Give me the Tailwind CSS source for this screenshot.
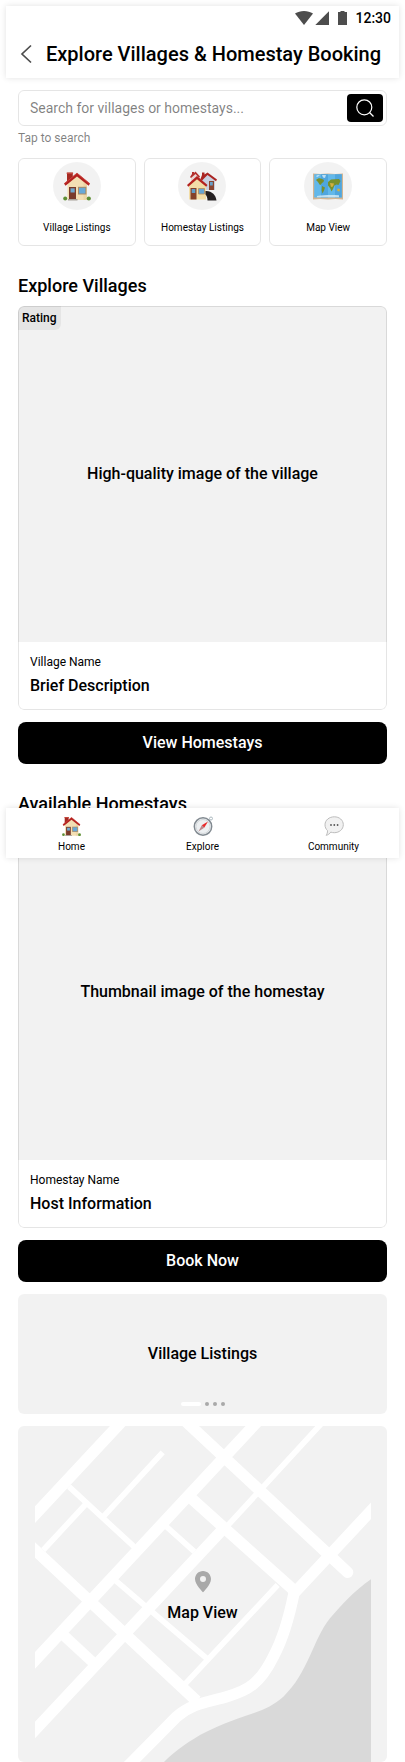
<!DOCTYPE html>
<html lang="en">
<head>
<meta charset="utf-8">
<meta name="viewport" content="width=device-width, initial-scale=1">
<title>Explore Villages &amp; Homestay Booking</title>
<script src="https://cdn.jsdelivr.net/npm/@tailwindcss/browser@4"></script>
</head>
<body class="bg-white">
<svg class="hidden" aria-hidden="true">
  <defs>
    <symbol id="house" viewBox="0 0 28 28">
      <path d="M4 .3h5.800V6L4 11z" fill="#a52a22"/><path d="M3.700 0h6.400v1.500H3.700z" fill="#c4473d"/>
      <path d="M4.500 10 14 2.500 24 11v16.500H4.500z" fill="#f3dfb4"/>
      <path d="M14 2.500 24 11v16.500h-3.500V10z" fill="#e6cb98" opacity=".5"/>
      <path d="M1 11 14 .2 27 11l-1.300 2.300L14 4 2.500 13.300z" fill="#b3211f"/>
      <path d="M1.800 10.800 14 .8l12.200 10" fill="none" stroke="#d4504a" stroke-width=".7"/>
      <path d="M6 14.500h7v12.500H6z" fill="#7a3b2a"/><path d="M7.500 15.800h4.200v4.200H7.500z" fill="#6fa9cf"/><path d="M5 26.500h9.500V28H5z" fill="#a9a29a"/>
      <path d="M15 14.300h8.400v7.700H15z" fill="#a98a66"/><path d="M16 15.300h6.400v5.700H16z" fill="#68a9d8"/>
      <circle cx="2.200" cy="26" r="2" fill="#5f8f35"/><circle cx="25.800" cy="26" r="2.100" fill="#5f8f35"/>
    </symbol>
  </defs>
</svg>
<div class="relative h-[1762px] w-[405px] overflow-hidden bg-white px-1.5 pt-1.5 font-['Roboto',sans-serif] text-black">
  <header class="flex h-[72px] flex-col bg-white shadow-[0_0_6px_rgba(0,0,0,0.12)]">
    <div class="flex h-6 items-center justify-end pr-2">
      <svg class="h-6 w-[53px]" viewBox="0 0 53 24" fill="#4d4d4d">
        <path d="M0 7.500C5 4 13 4 18 7.500L9 19z"/>
        <path d="M34 5.300V19H20.300z"/>
        <path d="M43 6h2.500V5h4v1H52v13h-9z"/>
      </svg>
      <span class="ml-[7px] text-sm font-medium leading-6">12:30</span>
    </div>
    <div class="flex h-12 items-center">
      <svg class="ml-3.5 h-5 w-3" viewBox="0 0 12 20" fill="none" stroke="#4d4d4d" stroke-width="1.700"><path d="M11 1.500 2 10l9 8.500"/></svg>
      <h1 class="ml-3.5 whitespace-nowrap text-xl font-medium">Explore Villages &amp; Homestay Booking</h1>
    </div>
  </header>

  <main class="px-3 pt-3">
    <div class="flex h-9 items-center justify-between rounded-md border border-black/10 pl-[11px] pr-[3px]">
      <span class="text-sm text-black/50">Search for villages or homestays...</span>
      <button class="flex h-7 w-9 items-center justify-center rounded bg-black" aria-label="Search">
        <svg class="h-5 w-5" viewBox="0 0 20 20" fill="none" stroke="#fff" stroke-width="1.200"><circle cx="9.300" cy="9.300" r="7.500"/><path d="m14.500 14.500 4 4"/></svg>
      </button>
    </div>
    <p class="mt-1 text-xs text-black/50">Tap to search</p>

    <div class="mt-3 grid grid-cols-3 gap-2">
      <div class="flex h-[88px] flex-col items-center rounded-md border border-black/10 pt-[3px]">
        <div class="flex h-12 w-12 items-center justify-center rounded-full bg-black/5"><svg class="h-[29px] w-7"><use href="#house"/></svg></div>
        <span class="mt-2.5 text-[10px] leading-4">Village Listings</span>
      </div>
      <div class="flex h-[88px] flex-col items-center rounded-md border border-black/10 pt-[3px]">
        <div class="flex h-12 w-12 items-center justify-center rounded-full bg-black/5">
          <svg class="h-[30px] w-[30px]" viewBox="0 0 30 30">
            <path d="M4 5 8.500 1.500 13 5v9H4z" fill="#ead7d4"/><path d="M3 6 5 3V1h2v1l1.500-1.500 4.500 5-1 1.200L8.500 3 4 7z" fill="#b4302d"/>
            <path d="M15 7.500 20.500 3 28 9v10H15z" fill="#c9d0e0"/><path d="M13.500 8 15 4V1.500h2.500v2L20.500 1.500 30 8.500l-1 1.700L20.500 4 15 9.500z" fill="#aa2422"/>
            <path d="M22 10h5v9h-5z" fill="#8a4532"/><path d="M23 11h2.800v3.500H23z" fill="#68a0c9"/>
            <path d="M2 13.500 10 7l9 7.500V28.500H2z" fill="#f2dda7"/><path d="M0 14 10 5l10.500 9-1.300 1.800L10 8.300 1.300 15.800z" fill="#b3221f"/>
            <path d="M3.500 17h6v11.500h-6z" fill="#844129"/><path d="M4.700 18h3.600v4H4.700z" fill="#5f9dc8"/><path d="M11.500 17.500h6v5.500h-6z" fill="#67a6d3" stroke="#b48b5c" stroke-width=".8"/>
            <path d="M18.500 20c6-.5 10.500 4 11 9.500H20.500c0-3-1-5-2-6z" fill="#231f20"/>
          </svg>
        </div>
        <span class="mt-2.5 text-[10px] leading-4">Homestay Listings</span>
      </div>
      <div class="flex h-[88px] flex-col items-center rounded-md border border-black/10 pt-[3px]">
        <div class="flex h-12 w-12 items-center justify-center rounded-full bg-black/5">
          <svg class="h-[27px] w-[30px]" viewBox="0 0 30 27">
            <path d="M0 .5 7.500 1 15 .5l7.500.5L30 .5v26l-7.500-.5-7.500.5L7.500 26 0 26.500z" fill="#d3b592"/>
            <path d="M1.200 1.200h27.600V24.500H1.200z" fill="#62b8ea"/><path d="M8 1.200h7v23.300H8zM22 1.200h6.800v23.300H22z" fill="#3c94d2" opacity=".5"/>
            <path d="M3 7c2-2 4-2 6-1l2 1-.5 2L9 10l-1.500 2-1-.5L5 9zM9 13l3 1.500-1 3-1.500 3-.8-3zM15 9l3-2.500 8-.5 1.500 2-2 4-2-.5-2 1L20 16l-1.500 2.500-1.200-3-2.300-3z" fill="#78902c"/>
            <path d="M17 10l4 .5-1 3-2 .5zM24.300 15.500l2.700.5-.5 2.500-2.200-.5z" fill="#d3b03f"/>
            <path d="M9 2h4l-1 3-2-.5zM3 3l2-1 2 .5L4 4zM4 23c7-1.300 15-1.300 22-.8v2H4z" fill="#d9eef7" opacity=".8"/>
          </svg>
        </div>
        <span class="mt-2.5 text-[10px] leading-4">Map View</span>
      </div>
    </div>

    <h2 class="mt-7 text-lg font-medium leading-6">Explore Villages</h2>
    <section class="relative mt-2 flex h-[404px] flex-col overflow-hidden rounded-md">
      <div class="flex h-[336px] items-center justify-center bg-black/5 text-base font-medium">High-quality image of the village</div>
      <span class="absolute left-0 top-0 h-6 rounded-br-md bg-black/5 px-1 text-xs font-medium leading-6">Rating</span>
      <div class="px-3 pt-3">
        <p class="text-xs">Village Name</p>
        <p class="mt-1 text-base font-medium">Brief Description</p>
      </div>
      <div class="absolute inset-0 rounded-md border border-black/10"></div>
    </section>
    <button class="mt-3 flex h-[42px] w-full items-center justify-center rounded-lg bg-black text-base font-medium text-white">View Homestays</button>

    <h2 class="mt-7 text-lg font-medium leading-6">Available Homestays</h2>
    <section class="relative mt-2 flex h-[404px] flex-col overflow-hidden rounded-md">
      <div class="flex h-[336px] items-center justify-center bg-black/5 text-base font-medium">Thumbnail image of the homestay</div>
      <div class="px-3 pt-3">
        <p class="text-xs">Homestay Name</p>
        <p class="mt-1 text-base font-medium">Host Information</p>
      </div>
      <div class="absolute inset-0 rounded-md border border-black/10"></div>
    </section>
    <button class="mt-3 flex h-[42px] w-full items-center justify-center rounded-lg bg-black text-base font-medium text-white">Book Now</button>

    <section class="mt-3 flex h-[120px] flex-col items-center rounded-md bg-black/5 pt-12">
      <p class="text-base font-medium">Village Listings</p>
      <div class="mt-9 flex h-1 items-center gap-1 pl-px">
        <span class="h-1 w-5 rounded-full bg-white"></span>
        <span class="h-1 w-1 rounded-full bg-black/30"></span>
        <span class="h-1 w-1 rounded-full bg-black/30"></span>
        <span class="h-1 w-1 rounded-full bg-black/30"></span>
      </div>
    </section>

    <section class="relative mt-3 h-[336px] overflow-hidden rounded-md bg-[#f2f2f2]">
      <svg class="h-[336px] w-[369px]" viewBox="54 18 1107 1008">
        <clipPath id="area"><path d="M105 18h1008v1008H105z"/></clipPath>
        <g clip-path="url(#area)" fill="none" stroke="#fff">
          <path d="M1113 478C1060 515 1030 550 990 595C940 655 925 760 850 830C790 885 720 880 600 945C550 975 520 998 492 1026H1113Z" fill="#d9d9d9" stroke="none"/>
          <g stroke-width="34">
            <path d="M373-3.500 85 305.500M780-3.500 85 742.500M1133 251 883 519M672 324 85 951.500M552-.6 1000 417M577 238 885 514M85 371.300 590 843"/>
            <path d="M1000 417l43 40" stroke-linecap="round"/>
            <path d="M883 515C868 590 850 655 820 710C780 790 745 812 680 830C620 847 575 850 530 890L376 1046"/>
            <path d="M190 645 282 730" stroke-width="32"/>
          </g>
          <path stroke-width="17" d="M974 0 680 320M207 200 402 380M255 255 130 390M488 97 310 290M497 318 583 395M347 482 445 566 620 715M833 495 557 790"/>
        </g>
        <path d="M609 453c-13.300 0-24 10.700-24 24 0 17 24 40 24 40s24-23 24-40c0-13.300-10.700-24-24-24zm0 33a9 9 0 1 1 0-18 9 9 0 0 1 0 18z" fill="#a9a9a9"/>
      </svg>
      <p class="absolute inset-x-0 top-[175px] text-center text-base font-medium">Map View</p>
    </section>
  </main>

  <nav class="absolute left-1.5 top-[808px] grid h-[50px] w-[393px] grid-cols-3 bg-white pt-2 text-[10px] leading-4 shadow-[0_0_6px_rgba(0,0,0,0.12)]">
    <div class="flex flex-col items-center gap-[3px]"><svg class="mt-px h-[19px] w-[19px]"><use href="#house"/></svg><span>Home</span></div>
    <div class="flex flex-col items-center gap-[3px]">
      <svg class="h-5 w-5" viewBox="0 0 20 20"><circle cx="18" cy="2.500" r="1.500" fill="none" stroke="#9aabb2" stroke-width=".8"/><circle cx="10" cy="10.500" r="8.700" fill="#edf0f2" stroke="#828a91" stroke-width="1.500"/><circle cx="10" cy="10.500" r="7" fill="none" stroke="#d3d7da" stroke-width="1"/><path d="M15 5.500 11.200 11.700 8.800 9.300z" fill="#e92b2b"/><path d="M5.500 15.500 8.800 9.300l2.400 2.400z" fill="#b9878b"/></svg>
      <span>Explore</span>
    </div>
    <div class="flex flex-col items-center gap-[3px]">
      <svg class="h-5 w-5" viewBox="0 0 20 20"><path d="M10.300.8c5 0 9 3.300 9 7.900s-4 8-9 8c-1.300 0-2.500-.2-3.500-.6-1 1.500-2.700 2.900-4.700 3.200 1-1.300 1.500-2.800 1.400-4.700C2 13.200 1 11.200 1 8.800 1 4 5.300.8 10.300.8z" fill="#f1f1f1" stroke="#bcbcbc" stroke-width="1"/><g fill="#555"><circle cx="7" cy="9" r=".9"/><circle cx="10.300" cy="9" r=".9"/><circle cx="13.600" cy="9" r=".9"/></g></svg>
      <span>Community</span>
    </div>
  </nav>
</div>
</body>
</html>
